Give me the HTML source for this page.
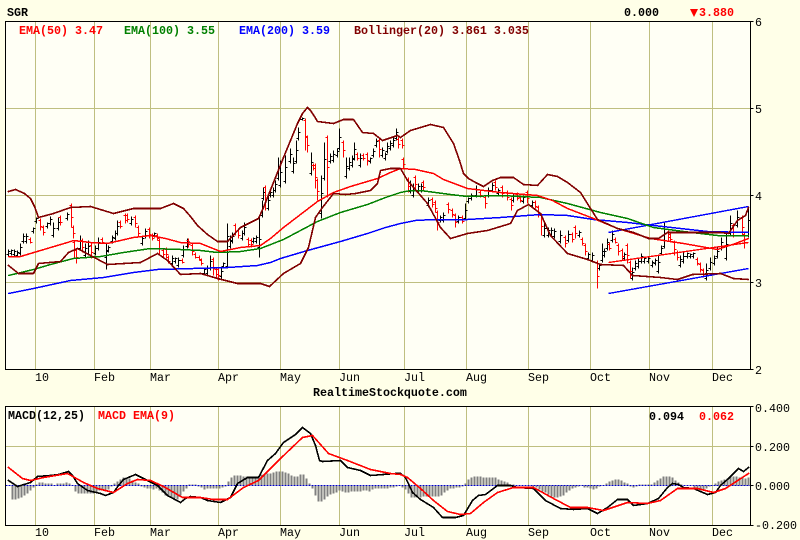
<!DOCTYPE html>
<html><head><meta charset="utf-8"><title>SGR</title>
<style>
html,body{margin:0;padding:0;background:#ffffe8;}
svg{display:block;}
text{font-family:"Liberation Mono",monospace;font-size:11.67px;fill:#000;}
.b{font-weight:bold;}
polyline{stroke-linejoin:round;stroke-linecap:round;}
</style></head><body>
<svg width="800" height="540" viewBox="0 0 800 540" xmlns="http://www.w3.org/2000/svg">
<rect width="800" height="540" fill="#ffffe8"/>
<rect x="5.5" y="21.5" width="745" height="348" fill="#fffff5"/>
<rect x="5.5" y="406.5" width="745" height="118.5" fill="#fffff5"/>
<g shape-rendering="crispEdges" transform="translate(.5 .5)">
<path fill="none" stroke="#bfbf80" stroke-width="1" d="M35 21V369M94 21V369M150 21V369M218 21V369M280 21V369M339 21V369M404 21V369M466 21V369M528 21V369M590 21V369M649 21V369M712 21V369M5 108H750M5 195H750M5 282H750"/>
<path fill="none" stroke="#bfbf80" stroke-width="1" d="M35 406V525M94 406V525M150 406V525M218 406V525M280 406V525M339 406V525M404 406V525M466 406V525M528 406V525M590 406V525M649 406V525M712 406V525M5 446H750"/>
<!-- price bars black -->
<path fill="none" stroke="#000" stroke-width="1" d="M8 249V256m-2-2h2m0-3h2M11 249V255m-2-2h2m0-3h2M14 249V256m-2-2h2m0-3h2M17 250V257m-2-2h2m0-3h2M20 243V255m-2-2h2m0-6h2M23 233V243m-2-2h2m0-5h2M26 233V243m-2-2h2m0-5h2M33 227V233m-2-2h2m0-3h2M36 217V223m-2-2h2m0-3h2M47 222V228m-2-2h2m0-3h2M50 216V225m-2-2h2m0-4h2M53 222V237m-2-2h2m0-7h2M58 217V230m-2-2h2m0-6h2M67 212V220m-2-2h2m0-4h2M80 235V250m-2-2h2m0-7h2M85 243V257m-2-2h2m0-7h2M88 240V255m-2-2h2m0-7h2M95 245V255m-2-2h2m0-5h2M98 237V250m-2-2h2m0-6h2M106 243V269m-2-12h2m0-6h2M108 245V252m-2-2h2m0-3h2M112 235V243m-2-2h2m0-4h2M115 230V240m-2-2h2m0-5h2M117 220V235m-2-2h2m0-7h2M131 216V225m-2-2h2m0-4h2M142 235V245m-2-2h2m0-5h2M145 228V238m-2-2h2m0-5h2M154 232V237m-2-2h2m0-2h2M172 255V265m-2-2h2m0-5h2M175 257V263m-2-2h2m0-3h2M178 257V267m-2-2h2m0-5h2M183 245V257m-2-2h2m0-6h2M187 238V248m-2-2h2m0-5h2M204 267V275m-2-2h2m0-4h2M207 265V275m-2-2h2m0-5h2M210 255V270m-2-2h2m0-7h2M221 267V278m-2-2h2m0-5h2M223 262V268m-2-2h2m0-3h2M227 223V268m-2-2h2m0-30h2M230 235V248m-2-2h2m0-6h2M232 232V243m-2-2h2m0-5h2M242 230V240m-2-2h2m0-5h2M244 222V235m-2-2h2m0-6h2M253 237V243m-2-2h2m0-3h2M256 235V243m-2-2h2m0-4h2M259 217V257m-2-10h2m0-8h2M262 200V217m-2-2h2m0-8h2M263 187V200m-2-2h2m0-6h2M268 193V210m-2-2h2m0-8h2M270 190V197m-2-2h2m0-3h2M273 187V197m-2-2h2m0-5h2M275 180V192m-2-2h2m0-6h2M278 157V180m-2-2h2m0-11h2M280 160V187m-2-2h2m0-13h2M285 155V183m-2-2h2m0-14h2M290 148V163m-2-2h2m0-7h2M293 157V173m-2-2h2m0-8h2M296 140V163m-2-2h2m0-11h2M298 127V140m-2-2h2m0-6h2M302 117V120m-2-1h2m0-1h2M311 152V175m-2-2h2m0-11h2M321 175V218m-2-5h2m0-20h2M324 142V180m-2-2h2m0-19h2M330 153V163m-2-2h2m0-5h2M333 150V162m-2-2h2m0-6h2M337 148V157m-2-2h2m0-4h2M339 128V150m-2-2h2m0-11h2M346 157V178m-2-2h2m0-10h2M349 157V170m-2-2h2m0-6h2M352 155V167m-2-2h2m0-6h2M354 142V160m-2-2h2m0-9h2M360 153V167m-2-2h2m0-7h2M370 157V163m-2-2h2m0-3h2M373 148V157m-2-2h2m0-4h2M376 138V147m-2-2h2m0-4h2M382 147V157m-2-2h2m0-5h2M385 152V160m-2-2h2m0-4h2M387 142V153m-2-2h2m0-5h2M390 140V150m-2-2h2m0-5h2M393 137V147m-2-2h2m0-5h2M396 128V140m-2-2h2m0-6h2M410 180V193m-2-2h2m0-6h2M413 183V197m-2-2h2m0-7h2M418 183V192m-2-2h2m0-4h2M421 183V192m-2-2h2m0-4h2M428 197V207m-2-2h2m0-5h2M440 215V222m-2-2h2m0-3h2M443 212V222m-2-2h2m0-5h2M458 215V223m-2-2h2m0-4h2M465 203V220m-2-2h2m0-8h2M468 197V203m-2-2h2m0-3h2M471 193V200m-2-2h2m0-3h2M476 185V197m-2-2h2m0-6h2M488 187V197m-2-2h2m0-5h2M492 182V192m-2-2h2m0-5h2M498 188V195m-2-2h2m0-3h2M513 193V202m-2-2h2m0-4h2M523 195V203m-2-2h2m0-4h2M532 200V207m-2-2h2m0-3h2M544 223V237m-2-2h2m0-7h2M548 227V237m-2-2h2m0-5h2M551 227V237m-2-2h2m0-5h2M554 228V238m-2-2h2m0-5h2M560 230V243m-2-2h2m0-6h2M568 230V242m-2-2h2m0-6h2M579 230V237m-2-2h2m0-3h2M588 252V260m-2-2h2m0-4h2M592 252V262m-2-2h2m0-5h2M599 263V270m-2-2h2m0-3h2M602 243V262m-2-2h2m0-9h2M604 248V257m-2-2h2m0-4h2M607 238V250m-2-2h2m0-6h2M612 230V242m-2-2h2m0-6h2M624 252V260m-2-2h2m0-4h2M632 267V280m-2-2h2m0-6h2M635 260V270m-2-2h2m0-5h2M638 257V268m-2-2h2m0-5h2M641 253V263m-2-2h2m0-5h2M644 257V263m-2-2h2m0-3h2M648 257V263m-2-2h2m0-3h2M652 260V267m-2-2h2m0-3h2M655 258V265m-2-2h2m0-3h2M658 255V273m-2-2h2m0-9h2M661 245V255m-2-2h2m0-5h2M664 222V248m-2-2h2m0-13h2M680 255V267m-2-2h2m0-6h2M683 252V263m-2-2h2m0-5h2M687 252V258m-2-2h2m0-3h2M690 253V258m-2-2h2m0-2h2M693 252V258m-2-2h2m0-3h2M706 263V280m-2-2h2m0-8h2M710 257V270m-2-2h2m0-6h2M714 255V265m-2-2h2m0-5h2M717 247V258m-2-2h2m0-5h2M721 237V250m-2-2h2m0-6h2M726 232V260m-2-2h2m0-14h2M730 215V235m-2-2h2m0-10h2M737 210V227m-2-2h2m0-8h2M748 207V237m-2-2h2m0-15h2"/>
<!-- price bars red -->
<path fill="none" stroke="#f00" stroke-width="1" d="M30 243V237m-2 2h2m0 3h2M40 230V218m-2 2h2m0 6h2M43 235V225m-2 2h2m0 5h2M60 225V215m-2 2h2m0 5h2M71 227V203m-2 2h2m0 12h2M73 238V225m-2 2h2m0 6h2M74 257V240m-2 2h2m0 8h2M76 263V248m-2 2h2m0 7h2M82 252V238m-2 2h2m0 7h2M91 258V243m-2 2h2m0 7h2M102 243V237m-2 2h2m0 3h2M120 228V220m-2 2h2m0 4h2M125 223V213m-2 2h2m0 5h2M127 222V213m-2 2h2m0 4h2M135 227V215m-2 2h2m0 6h2M138 237V225m-2 2h2m0 6h2M149 238V227m-2 2h2m0 5h2M152 240V233m-2 2h2m0 3h2M157 240V233m-2 2h2m0 3h2M159 255V238m-2 2h2m0 8h2M163 257V248m-2 2h2m0 4h2M166 258V247m-2 2h2m0 5h2M168 263V255m-2 2h2m0 4h2M182 263V258m-2 2h2m0 2h2M188 247V238m-2 2h2m0 4h2M192 255V243m-2 2h2m0 6h2M195 258V252m-2 2h2m0 3h2M199 260V255m-2 2h2m0 2h2M201 265V258m-2 2h2m0 3h2M213 275V257m-2 2h2m0 9h2M216 277V267m-2 2h2m0 5h2M218 280V267m-2 2h2m0 6h2M235 235V223m-2 2h2m0 6h2M238 238V228m-2 2h2m0 5h2M248 247V237m-2 2h2m0 5h2M251 247V238m-2 2h2m0 4h2M265 210V185m-2 2h2m0 12h2M305 150V118m-2 2h2m0 16h2M307 152V135m-2 2h2m0 8h2M313 170V163m-2 2h2m0 3h2M315 188V163m-2 2h2m0 12h2M317 200V178m-2 2h2m0 11h2M327 197V135m-2 2h2m0 30h2M343 157V140m-2 2h2m0 8h2M357 160V152m-2 2h2m0 4h2M363 160V153m-2 2h2m0 3h2M367 165V152m-2 2h2m0 6h2M379 157V138m-2 2h2m0 9h2M398 148V137m-2 2h2m0 5h2M402 148V138m-2 2h2m0 5h2M403 168V157m-2 2h2m0 5h2M408 192V177m-2 2h2m0 7h2M415 190V175m-2 2h2m0 7h2M423 190V180m-2 2h2m0 5h2M432 207V197m-2 2h2m0 5h2M435 212V200m-2 2h2m0 6h2M437 230V210m-2 2h2m0 10h2M448 213V202m-2 2h2m0 5h2M452 217V208m-2 2h2m0 4h2M455 227V213m-2 2h2m0 7h2M462 223V215m-2 2h2m0 4h2M480 197V190m-2 2h2m0 3h2M485 208V195m-2 2h2m0 6h2M495 190V180m-2 2h2m0 5h2M502 197V185m-2 2h2m0 6h2M507 200V190m-2 2h2m0 5h2M511 210V197m-2 2h2m0 6h2M517 200V192m-2 2h2m0 4h2M520 202V195m-2 2h2m0 3h2M527 203V190m-2 2h2m0 6h2M535 208V200m-2 2h2m0 4h2M538 217V205m-2 2h2m0 6h2M541 235V213m-2 2h2m0 11h2M565 247V235m-2 2h2m0 6h2M572 242V232m-2 2h2m0 5h2M575 238V225m-2 2h2m0 6h2M582 245V237m-2 2h2m0 4h2M585 255V243m-2 2h2m0 6h2M597 288V260m-2 2h2m0 14h2M609 250V242m-2 2h2m0 4h2M615 243V237m-2 2h2m0 3h2M618 255V243m-2 2h2m0 6h2M622 260V248m-2 2h2m0 6h2M627 263V243m-2 2h2m0 10h2M630 278V260m-2 2h2m0 9h2M668 240V230m-2 2h2m0 5h2M670 242V232m-2 2h2m0 5h2M674 255V240m-2 2h2m0 7h2M677 260V250m-2 2h2m0 5h2M697 265V257m-2 2h2m0 4h2M700 272V262m-2 2h2m0 5h2M703 277V268m-2 2h2m0 4h2M733 237V223m-2 2h2m0 7h2M742 235V215m-2 2h2m0 10h2M744 248V232m-2 2h2m0 8h2"/>
<!-- trend lines -->
<path fill="none" stroke="#00f" stroke-width="1.4" d="M608 232L748 206M608 293L748 268"/>
<path fill="none" stroke="#f00" stroke-width="1.4" d="M608 262L748 242"/>
<!-- EMA200 -->
<polyline fill="none" stroke="#00f" stroke-width="1.5" points="8,293 33,288 70,280 103,277 133,272 157,269 193,268 227,267 257,265 270,262 280,258 307,250 340,241 367,233 385,227 400,223 415,220 433,219 467,219 500,217 540,214 567,215 593,219 627,222 653,225 680,228 707,231 748,232"/>
<!-- EMA100 -->
<polyline fill="none" stroke="#008000" stroke-width="1.5" points="8,275 33,269 50,264 73,258 100,256 123,252 150,248 180,249 200,250 217,252 240,251 260,248 283,239 300,230 317,221 340,212 367,204 385,197 400,192 410,190 420,190 450,194 467,196 500,195 540,197 567,203 600,212 627,218 653,227 683,231 717,235 748,235"/>
<!-- EMA50 -->
<polyline fill="none" stroke="#f00" stroke-width="1.5" points="8,256 20,256 40,250 67,242 73,240 90,242 107,243 133,237 150,235 165,238 180,242 200,243 210,247 220,251 240,247 260,245 270,238 283,227 317,201 333,192 350,186 377,178 390,172 400,168 415,169 433,173 443,179 467,188 500,192 537,195 552,200 567,208 593,218 617,228 650,238 683,243 717,249 735,243 748,238"/>
<!-- Bollinger -->
<polyline fill="none" stroke="#800000" stroke-width="1.6" points="8,191 15,189 24,193 30,198 34,206 38,217 53,213 70,207 90,206 113,213 133,208 160,208 173,203 183,208 190,216 197,225 207,234 217,241 227,241 240,227 258,218 263,207 267,197 283,157 297,123 302,113 307,107 310,110 314,116 317,121 333,123 343,119 353,119 362,132 373,133 382,140 397,135 400,137 410,130 420,127 430,124 443,127 453,143 459,160 463,173 468,178 475,182 483,186 492,180 500,177 513,177 523,184 537,185 547,174 557,176 567,182 580,192 590,208 597,219 617,228 633,232 648,238 658,238 667,232 687,232 720,232 728,233 737,220 745,215 748,207"/>
<polyline fill="none" stroke="#800000" stroke-width="1.6" points="8,265 18,273 33,273 38,263 60,261 68,252 77,248 90,255 107,264 140,262 157,253 167,260 180,274 200,273 207,275 217,278 237,283 260,283 269,286 283,273 300,263 308,247 315,217 322,207 333,193 345,194 355,193 370,190 377,183 380,170 390,168 400,168 407,180 427,203 440,227 450,238 467,233 487,230 510,223 517,210 528,204 540,213 550,235 567,253 587,259 600,264 623,265 632,275 660,277 677,279 692,274 720,273 733,278 748,279"/>
<!-- MACD histogram -->
<path fill="none" stroke="#808080" stroke-width="2" d="M12 485v14M15 485v14M18 485v13M21 485v12M24 485v10M27 485v8M30 485v5M33 485v2M36 485v-1M39 485v-3M42 485v-3M45 485v-2M48 485v-2M51 485v-2M57 485v-2M60 485v-2M63 485v-2M66 485v-3M69 485v-2M75 485v6M78 485v8M81 485v8M84 485v8M87 485v8M90 485v8M93 485v8M96 485v7M99 485v5M102 485v5M105 485v6M108 485v4M111 485v1M114 485v-2M117 485v-4M120 485v-6M123 485v-8M126 485v-8M129 485v-7M132 485v-5M135 485v-3M138 485v-2M141 485v1M144 485v2M147 485v3M150 485v3M153 485v4M156 485v3M159 485v5M162 485v7M165 485v10M168 485v11M171 485v12M174 485v13M177 485v14M180 485v10M183 485v6M186 485v3M189 485v-1M192 485v-1M195 485v-1M198 485v1M201 485v2M204 485v4M207 485v3M210 485v3M213 485v3M216 485v3M219 485v3M222 485v2M225 485v1M228 485v-4M231 485v-8M234 485v-10M237 485v-10M240 485v-10M243 485v-9M246 485v-9M249 485v-9M252 485v-9M255 485v-9M258 485v-9M261 485v-11M264 485v-11M267 485v-12M270 485v-12M273 485v-13M276 485v-14M279 485v-14M282 485v-14M285 485v-13M288 485v-12M291 485v-10M294 485v-9M297 485v-9M300 485v-11M303 485v-11M306 485v-7M309 485v-2M312 485v3M315 485v10M318 485v16M321 485v16M324 485v14M327 485v11M330 485v9M333 485v8M336 485v7M339 485v5M342 485v6M345 485v7M348 485v7M351 485v6M354 485v6M357 485v6M360 485v6M363 485v5M366 485v5M369 485v6M372 485v4M375 485v3M378 485v3M381 485v3M384 485v3M387 485v3M390 485v2M393 485v2M396 485v1M402 485v2M405 485v4M408 485v8M411 485v12M414 485v12M417 485v12M420 485v12M423 485v11M426 485v11M429 485v11M432 485v11M435 485v11M438 485v11M441 485v10M444 485v7M447 485v5M450 485v3M453 485v3M456 485v2M459 485v2M462 485v1M465 485v-2M468 485v-6M471 485v-8M474 485v-9M477 485v-9M480 485v-9M483 485v-8M486 485v-8M489 485v-8M492 485v-8M495 485v-8M498 485v-6M501 485v-5M504 485v-4M507 485v-3M510 485v-1M513 485v-1M533 485v1M536 485v2M539 485v4M542 485v6M545 485v7M548 485v9M551 485v11M554 485v12M557 485v12M560 485v11M563 485v10M566 485v7M569 485v5M572 485v3M575 485v2M578 485v1M584 485v2M587 485v2M590 485v3M593 485v4M596 485v3M599 485v1M606 485v-2M609 485v-4M612 485v-5M615 485v-6M618 485v-6M621 485v-5M624 485v-3M627 485v-2M630 485v1M633 485v2M636 485v1M639 485v-1M642 485v-1M645 485v-1M648 485v-1M651 485v-1M654 485v-3M657 485v-5M660 485v-7M663 485v-9M666 485v-9M669 485v-9M672 485v-8M675 485v-5M678 485v-3M681 485v-1M694 485v2M697 485v3M700 485v3M703 485v4M706 485v3M709 485v1M715 485v-2M718 485v-4M721 485v-5M724 485v-6M727 485v-7M730 485v-9M733 485v-9M736 485v-9M739 485v-8M742 485v-9M745 485v-7M748 485v-8"/>
<path fill="none" stroke="#0000c8" stroke-width="1" stroke-dasharray="2 1" d="M5 485H750"/>
<polyline fill="none" stroke="#000" stroke-width="1.6" points="8,480 17,486 30,482 37,476 50,475 58,474 68,471 72,475 77,483 87,490 100,493 105,495 113,492 118,485 123,479 135,474 147,480 157,485 167,495 180,502 185,498 190,496 200,497 207,500 220,502 230,497 237,483 247,477 258,477 267,460 275,453 283,442 295,434 302,427 310,433 315,445 319,460 322,461 340,460 347,467 360,470 370,475 383,474 395,473 400,473 405,477 412,492 420,499 433,507 442,517 455,517 463,515 472,500 478,495 485,494 497,485 510,485 517,487 533,488 545,500 560,508 573,509 587,508 597,513 607,507 617,499 627,499 633,505 647,503 658,498 667,487 672,483 678,484 683,487 693,488 707,494 715,492 720,485 728,478 738,468 743,471 748,467"/>
<polyline fill="none" stroke="#f00" stroke-width="1.6" points="8,467 22,478 30,480 43,477 67,473 83,482 97,488 113,492 127,483 137,479 150,480 163,486 182,497 200,497 213,499 227,499 243,487 258,480 280,458 302,437 312,435 328,453 347,460 370,469 390,473 400,474 407,477 420,488 433,500 447,511 460,514 470,513 483,502 497,492 513,487 533,487 553,498 570,507 587,507 603,510 627,502 647,503 660,500 677,488 697,488 713,492 725,488 748,473"/>
<!-- frames -->
<path fill="none" stroke="#000" stroke-width="1" d="M5 21H750V369H5ZM5 406H750V525H5Z"/>
<path fill="none" stroke="#000" stroke-width="1" d="M750 21h3M750 108h3M750 195h3M750 282h3M750 369h3M750 406h3M750 446h3M750 485h3M750 525h3"/>
</g>
<text class="b" x="7" y="16">SGR</text>
<text class="b" x="624" y="16">0.000</text>
<polygon points="690,9 698,9 694,17" fill="#f00"/>
<text class="b" x="699" y="16" style="fill:#f00">3.880</text>
<text class="b" x="19" y="34" style="fill:#f00">EMA(50) 3.47</text>
<text class="b" x="124" y="34" style="fill:#008000">EMA(100) 3.55</text>
<text class="b" x="239" y="34" style="fill:#00f">EMA(200) 3.59</text>
<text class="b" x="354" y="34" style="fill:#800000">Bollinger(20) 3.861 3.035</text>
<text x="755" y="26">6</text><text x="755" y="113">5</text><text x="755" y="200">4</text><text x="755" y="287">3</text><text x="755" y="374">2</text>
<text x="35" y="381">10</text><text x="94" y="381">Feb</text><text x="150" y="381">Mar</text><text x="218" y="381">Apr</text><text x="280" y="381">May</text><text x="339" y="381">Jun</text><text x="404" y="381">Jul</text><text x="466" y="381">Aug</text><text x="528" y="381">Sep</text><text x="590" y="381">Oct</text><text x="649" y="381">Nov</text><text x="712" y="381">Dec</text>
<text class="b" x="313" y="396">RealtimeStockquote.com</text>
<text class="b" x="8" y="419">MACD(12,25)</text>
<text class="b" x="98" y="419" style="fill:#f00">MACD EMA(9)</text>
<text class="b" x="649" y="420">0.094</text>
<text class="b" x="699" y="420" style="fill:#f00">0.062</text>
<text x="755" y="412">0.400</text><text x="755" y="451">0.200</text><text x="755" y="490">0.000</text><text x="755" y="529">-0.200</text>
<text x="35" y="536">10</text><text x="94" y="536">Feb</text><text x="150" y="536">Mar</text><text x="218" y="536">Apr</text><text x="280" y="536">May</text><text x="339" y="536">Jun</text><text x="404" y="536">Jul</text><text x="466" y="536">Aug</text><text x="528" y="536">Sep</text><text x="590" y="536">Oct</text><text x="649" y="536">Nov</text><text x="712" y="536">Dec</text>
</svg>
</body></html>
